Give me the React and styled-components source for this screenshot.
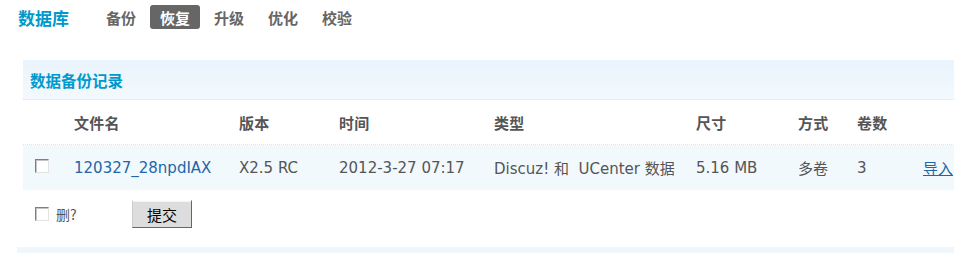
import React from "react";
import styled, { createGlobalStyle } from "styled-components";

const GlobalStyle = createGlobalStyle`
  html, body {
    margin: 0;
    padding: 0;
    background: #fff;
    overflow: hidden;
  }
  body {
    font-family: "DejaVu Sans", Verdana, "Noto Sans CJK SC", sans-serif;
    font-size: 15px;
    color: #555;
  }
`;

const Page = styled.div`
  box-sizing: border-box;
  width: 954px;
  padding-left: 17px;
  overflow: hidden;
`;

const Nav = styled.div`
  display: flex;
  align-items: center;
  height: 34px;
  padding-left: 1px;
`;

const Title = styled.h3`
  margin: 0 27px 0 0;
  font-size: 17px;
  font-weight: bold;
  color: #09c;
  font-family: "Noto Sans CJK SC", sans-serif;
`;

const NavItem = styled.a`
  display: flex;
  align-items: center;
  height: 24px;
  padding: 0 10px;
  margin-right: 4px;
  border-radius: 3px;
  font-size: 15px;
  font-weight: bold;
  font-family: "Noto Sans CJK SC", sans-serif;
  color: ${p => (p.active ? "#fff" : "#666")};
  background: ${p => (p.active ? "#666" : "transparent")};
`;

const Table = styled.div`
  margin-top: 26px;
  margin-left: 6px;
`;

const BoxHeader = styled.div`
  display: flex;
  align-items: center;
  height: 39px;
  padding-left: 7px;
  background: linear-gradient(#eaf4fc, #f3f9fe);
  border-bottom: 1px dotted #d6e7f4;
  font-family: "Noto Sans CJK SC", sans-serif;
  font-size: 15.5px;
  font-weight: bold;
  color: #09c;
`;

const Row = styled.div`
  display: grid;
  grid-template-columns: 51px 165px 100px 155px 202px 102px 59px 66px 60px;
  align-items: center;
  height: ${p => p.h}px;
  background: ${p => (p.hl ? "#f2f9fd" : "transparent")};
  border-bottom: ${p => (p.line ? "1px dotted #d6e7f4" : "none")};
`;

const Th = styled.div`
  font-family: "Noto Sans CJK SC", sans-serif;
  font-weight: bold;
  font-size: 15px;
  letter-spacing: 0.3px;
  color: #555;
  white-space: nowrap;
`;

const Td = styled.div`
  white-space: nowrap;
  color: #555;
  font-size: 15px;
`;

const Cjk = styled.span`
  font-family: "Noto Sans CJK SC", sans-serif;
`;

const Link = styled.a`
  color: #2366a8;
  text-decoration: ${p => (p.underline ? "underline" : "none")};
  font-family: ${p => (p.cjk ? '"Noto Sans CJK SC", sans-serif' : "inherit")};
`;

const Check = styled.input.attrs({ type: "checkbox" })`
  appearance: none;
  box-sizing: border-box;
  margin: 0 0 0 ${p => (p.inRow ? 12 : 0)}px;
  width: 14px;
  height: 14px;
  background: #fff;
  border-top: 1px solid #808080;
  border-left: 1px solid #808080;
  border-right: 1px solid #e2e2e2;
  border-bottom: 1px solid #e2e2e2;
  box-shadow: inset 1px 1px 0 #c4c4c4;
`;

const Footer = styled.div`
  display: flex;
  align-items: center;
  height: 48px;
  padding-left: 12px;
`;

const DelLabel = styled.label`
  display: flex;
  align-items: center;
  gap: 7px;
  width: 97px;
  font-family: "Noto Sans CJK SC", sans-serif;
  font-size: 14px;
  color: #555;
`;

const Button = styled.button`
  width: 60px;
  height: 28px;
  background: #ddd;
  border-top: 1px solid #fff;
  border-left: 1px solid #ccc;
  border-right: 1px solid #666;
  border-bottom: 1px solid #666;
  box-shadow: inset 0 1px 0 #f4f4f4;
  font-family: "Noto Sans CJK SC", sans-serif;
  font-size: 15px;
  color: #000;
  padding: 0;
`;

const Band = styled.div`
  margin-top: 9px;
  height: 10px;
  background: #f0f7fc;
`;

const navItems = ["备份", "恢复", "升级", "优化", "校验"];
const headers = ["", "文件名", "版本", "时间", "类型", "尺寸", "方式", "卷数", ""];

export default function App() {
  return (
    <Page>
      <GlobalStyle />
      <Nav>
        <Title>数据库</Title>
        {navItems.map(n => (
          <NavItem key={n} active={n === "恢复"}>
            {n}
          </NavItem>
        ))}
      </Nav>
      <Table>
        <BoxHeader>数据备份记录</BoxHeader>
        <Row h={44} line>
          {headers.map((h, i) => (
            <Th key={i}>{h}</Th>
          ))}
        </Row>
        <Row h={45} hl>
          <Td>
            <Check inRow />
          </Td>
          <Td>
            <Link>120327_28npdIAX</Link>
          </Td>
          <Td>X2.5 RC</Td>
          <Td>2012-3-27 07:17</Td>
          <Td>
            Discuz! <Cjk>和</Cjk>&nbsp; UCenter <Cjk>数据</Cjk>
          </Td>
          <Td>5.16 MB</Td>
          <Td>
            <Cjk>多卷</Cjk>
          </Td>
          <Td>3</Td>
          <Td>
            <Link underline cjk>
              导入
            </Link>
          </Td>
        </Row>
        <Footer>
          <DelLabel>
            <Check />
            删?
          </DelLabel>
          <Button>提交</Button>
        </Footer>
      </Table>
      <Band />
    </Page>
  );
}
